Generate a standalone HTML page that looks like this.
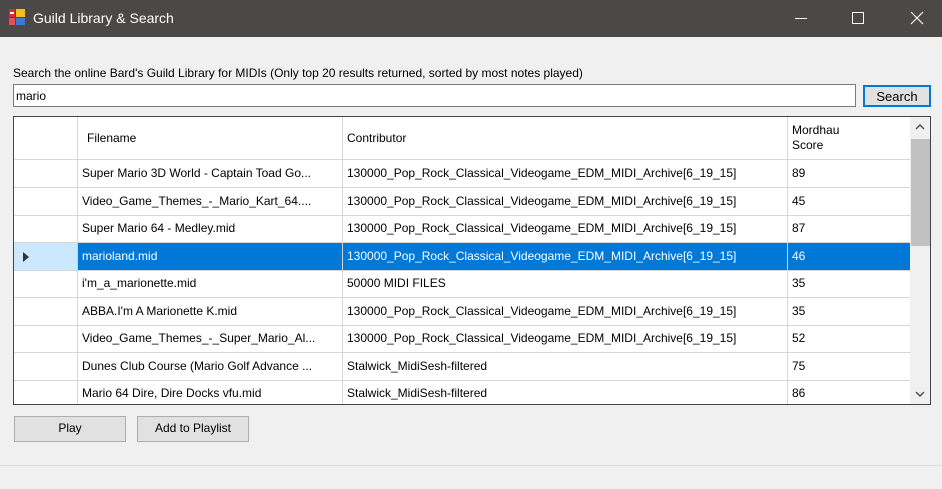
<!DOCTYPE html>
<html><head><style>
*{margin:0;padding:0;box-sizing:border-box}
body{width:942px;height:489px;background:#f0f0f0;font-family:"Liberation Sans",Arial,sans-serif;font-size:12px;color:#000;position:relative;overflow:hidden}
.title{position:absolute;left:0;top:0;width:942px;height:37px;background:#4a4947;color:#fff;font-size:14px}
.title .t{position:absolute;left:33px;top:10px}
.abs{position:absolute}
.tb{left:13px;top:84px;width:843px;height:23px;background:#fff;border:1px solid #7a7a7a;padding:4px 2px;font-size:12px}
.btn{background:#e1e1e1;border:1px solid #adadad;text-align:center;line-height:23px;font-size:12px}
.grid{left:13px;top:116px;width:918px;height:289px;border:1px solid #444;background:#fff;overflow:hidden}
.row{position:absolute;left:0;height:28px;width:897px;border-bottom:1px solid #d6d6d6}
.c{position:absolute;top:0;height:100%;border-right:1px solid #d6d6d6;padding:0 4px;line-height:26px;white-space:nowrap;overflow:hidden}
.c0{left:0;width:64px}.c1{left:64px;width:265px}.c2{left:329px;width:445px}.c3{left:774px;width:123px;border-right:none}
.sel .c1,.sel .c2,.sel .c3{background:#0078d7;color:#fff}
.sel .c0{background:#cce8ff}
</style></head><body>
<div class="title">
<svg class="abs" style="left:9px;top:9px" width="17" height="17"><rect x="0" y="0" width="6" height="8" fill="#c33"/><rect x="7" y="0" width="9" height="8" fill="#f4c020"/><rect x="0" y="9" width="6" height="7" fill="#d55"/><rect x="7" y="9" width="9" height="7" fill="#3a7bd5"/><rect x="1" y="3" width="4" height="2" fill="#fff"/></svg>
<span class="t">Guild Library &amp; Search</span>
<div class="abs" style="left:795px;top:18px;width:12px;height:1px;background:#fff"></div>
<div class="abs" style="left:852px;top:12px;width:12px;height:12px;border:1px solid #fff"></div>
<svg class="abs" style="left:910px;top:11px" width="14" height="14"><path d="M1 1L13 13M13 1L1 13" stroke="#fff" stroke-width="1.2"/></svg>
</div>
<div class="abs" style="left:13px;top:66px">Search the online Bard's Guild Library for MIDIs (Only top 20 results returned, sorted by most notes played)</div>
<div class="abs tb">mario</div>
<div class="abs btn" style="left:863px;top:85px;width:68px;height:22px;line-height:20px;border:2px solid #0078d7;font-size:13px">Search</div>
<div class="abs grid">
<div class="row" style="top:0;height:43px"><div class="c c0"></div><div class="c c1" style="line-height:43px;padding-left:9px">Filename</div><div class="c c2" style="line-height:43px">Contributor</div><div class="c c3" style="line-height:15px;padding-top:6px">Mordhau<br>Score</div></div>
<div class="row" style="top:43px"><div class="c c0"></div><div class="c c1">Super Mario 3D World - Captain Toad Go...</div><div class="c c2">130000_Pop_Rock_Classical_Videogame_EDM_MIDI_Archive[6_19_15]</div><div class="c c3">89</div></div>
<div class="row" style="top:70.5px"><div class="c c0"></div><div class="c c1">Video_Game_Themes_-_Mario_Kart_64....</div><div class="c c2">130000_Pop_Rock_Classical_Videogame_EDM_MIDI_Archive[6_19_15]</div><div class="c c3">45</div></div>
<div class="row" style="top:98px"><div class="c c0"></div><div class="c c1">Super Mario 64 - Medley.mid</div><div class="c c2">130000_Pop_Rock_Classical_Videogame_EDM_MIDI_Archive[6_19_15]</div><div class="c c3">87</div></div>
<div class="row sel" style="top:125.5px"><div class="c c0"><svg style="position:absolute;left:9px;top:9px" width="6" height="10"><path d="M0 0L6 5L0 10Z" fill="#333"/></svg></div><div class="c c1">marioland.mid</div><div class="c c2">130000_Pop_Rock_Classical_Videogame_EDM_MIDI_Archive[6_19_15]</div><div class="c c3">46</div></div>
<div class="row" style="top:153px"><div class="c c0"></div><div class="c c1">i'm_a_marionette.mid</div><div class="c c2">50000 MIDI FILES</div><div class="c c3">35</div></div>
<div class="row" style="top:180.5px"><div class="c c0"></div><div class="c c1">ABBA.I'm A Marionette K.mid</div><div class="c c2">130000_Pop_Rock_Classical_Videogame_EDM_MIDI_Archive[6_19_15]</div><div class="c c3">35</div></div>
<div class="row" style="top:208px"><div class="c c0"></div><div class="c c1">Video_Game_Themes_-_Super_Mario_Al...</div><div class="c c2">130000_Pop_Rock_Classical_Videogame_EDM_MIDI_Archive[6_19_15]</div><div class="c c3">52</div></div>
<div class="row" style="top:235.5px"><div class="c c0"></div><div class="c c1">Dunes Club Course (Mario Golf Advance ...</div><div class="c c2">Stalwick_MidiSesh-filtered</div><div class="c c3">75</div></div>
<div class="row" style="top:263px;border-bottom:none"><div class="c c0"></div><div class="c c1">Mario 64 Dire, Dire Docks vfu.mid</div><div class="c c2">Stalwick_MidiSesh-filtered</div><div class="c c3">86</div></div>
<div class="abs" style="left:896px;top:0;width:21px;height:287px;background:#f0f0f0">
<svg class="abs" style="left:5px;top:7px" width="10" height="6"><path d="M1 5L5 1L9 5" stroke="#555" stroke-width="1.5" fill="none"/></svg>
<div class="abs" style="left:1px;top:22px;width:19px;height:107px;background:#c1c1c1"></div>
<svg class="abs" style="left:5px;top:274px" width="10" height="6"><path d="M1 1L5 5L9 1" stroke="#555" stroke-width="1.5" fill="none"/></svg>
</div>
</div>
<div class="abs btn" style="left:14px;top:416px;width:112px;height:26px">Play</div>
<div class="abs btn" style="left:137px;top:416px;width:112px;height:26px">Add to Playlist</div>
<div class="abs" style="left:0;top:465px;width:942px;height:1px;background:#dcdcdc"></div>
</body></html>
